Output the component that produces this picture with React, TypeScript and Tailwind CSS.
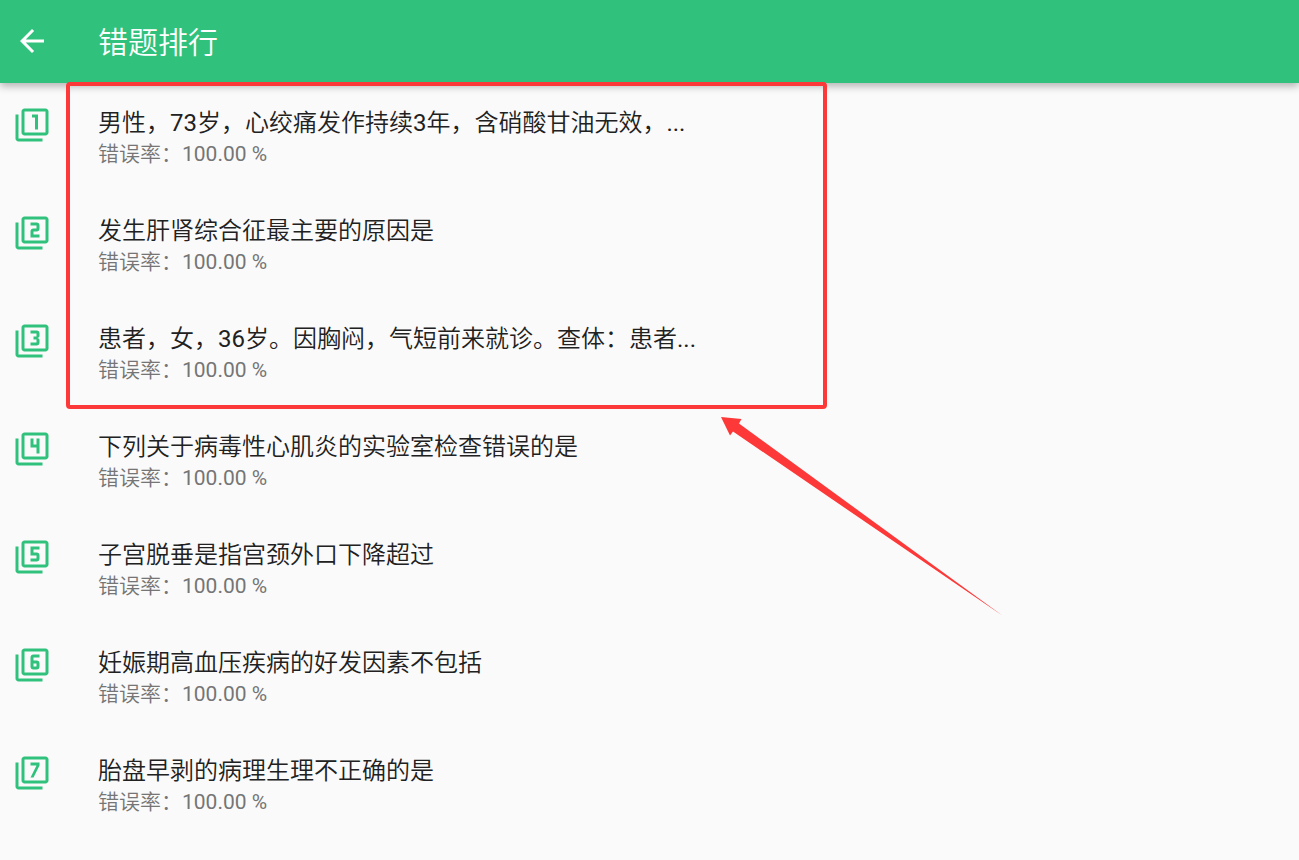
import {
  MdArrowBack,
  MdFilter1,
  MdFilter2,
  MdFilter3,
  MdFilter4,
  MdFilter5,
  MdFilter6,
  MdFilter7,
} from "react-icons/md";

const QUESTIONS = [
  { icon: MdFilter1, title: "男性，73岁，心绞痛发作持续3年，含硝酸甘油无效，...", rate: "100.00" },
  { icon: MdFilter2, title: "发生肝肾综合征最主要的原因是", rate: "100.00" },
  { icon: MdFilter3, title: "患者，女，36岁。因胸闷，气短前来就诊。查体：患者...", rate: "100.00" },
  { icon: MdFilter4, title: "下列关于病毒性心肌炎的实验室检查错误的是", rate: "100.00" },
  { icon: MdFilter5, title: "子宫脱垂是指宫颈外口下降超过", rate: "100.00" },
  { icon: MdFilter6, title: "妊娠期高血压疾病的好发因素不包括", rate: "100.00" },
  { icon: MdFilter7, title: "胎盘早剥的病理生理不正确的是", rate: "100.00" },
];

// Red frame around the top three, with an arrow pointing at it
function Callout() {
  return (
    <div className="absolute left-[66px] top-[82px] z-20 h-[327px] w-[761px] rounded border-4 border-[#fd3838] pointer-events-none">
      <svg
        className="absolute left-[650px] top-[330px] text-[#fd3838]"
        width="284"
        height="202"
        viewBox="0 0 284 202"
        fill="currentColor"
        aria-hidden="true"
      >
        <path d="M1 1L21.5 3L19 7.5L283 200L13 15.5L10 19.5Z" />
      </svg>
    </div>
  );
}

export default function App() {
  return (
    <div
      lang="zh-CN"
      className="relative min-h-screen overflow-hidden bg-[#fafafa] font-[Roboto,'Noto_Sans_CJK_SC_DemiLight','Noto_Sans_CJK_SC_Light','Noto_Sans_CJK_SC',sans-serif]"
    >
      <header className="relative z-10 flex items-start gap-12 bg-[#30c27c] px-[14px] pt-[23px] pb-5 text-white shadow-[0_3px_8px_rgba(0,0,0,0.3)]">
        <button type="button" aria-label="返回" className="shrink-0">
          <MdArrowBack className="size-9" />
        </button>
        <h1 className="truncate text-[30px] leading-10">错题排行</h1>
      </header>

      <main>
        <ol>
          {QUESTIONS.map(({ icon: Icon, title, rate }) => (
            <li key={title} className="flex h-[108px] items-start gap-12 px-[14px] pt-6">
              <Icon className="size-9 shrink-0 text-[#30c27c]" />
              <div className="min-w-0">
                <p className="truncate text-2xl leading-8 text-[#212121]">{title}</p>
                <p className="text-[21px] leading-[30px] text-[#757575]">错误率：{rate} %</p>
              </div>
            </li>
          ))}
        </ol>
      </main>

      <Callout />
    </div>
  );
}
